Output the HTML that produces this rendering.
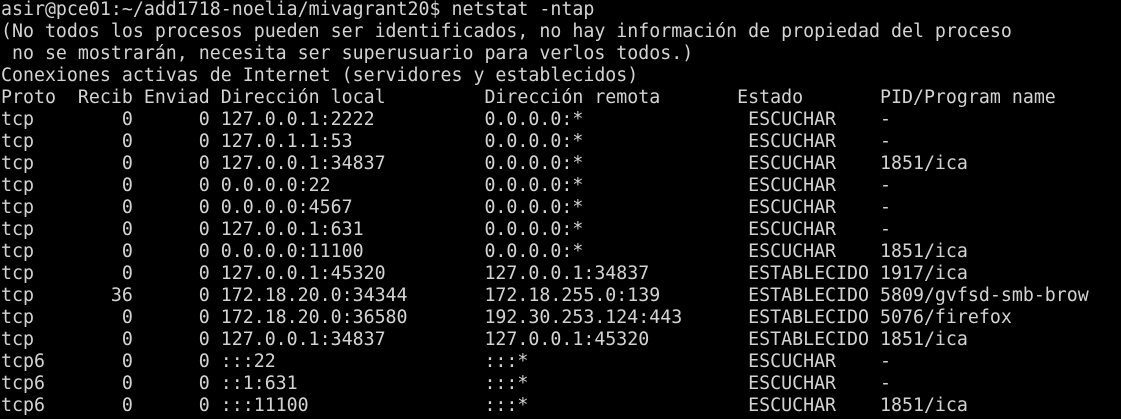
<!DOCTYPE html>
<html><head><meta charset="utf-8"><style>
html,body{margin:0;padding:0;background:#000;width:1121px;height:419px;overflow:hidden}
pre{margin:0;padding:0;position:absolute;left:1px;top:-1px;font-family:"DejaVu Sans Mono","Liberation Mono",monospace;font-size:18.25px;line-height:22px;color:#d3d3d3;white-space:pre}
</style></head><body><pre>asir@pce01:~/add1718-noelia/mivagrant20$ netstat -ntap
(No todos los procesos pueden ser identificados, no hay información de propiedad del proceso
 no se mostrarán, necesita ser superusuario para verlos todos.)
Conexiones activas de Internet (servidores y establecidos)
Proto  Recib Enviad Dirección local         Dirección remota       Estado       PID/Program name
tcp        0      0 127.0.0.1:2222          0.0.0.0:*               ESCUCHAR    -
tcp        0      0 127.0.1.1:53            0.0.0.0:*               ESCUCHAR    -
tcp        0      0 127.0.0.1:34837         0.0.0.0:*               ESCUCHAR    1851/ica
tcp        0      0 0.0.0.0:22              0.0.0.0:*               ESCUCHAR    -
tcp        0      0 0.0.0.0:4567            0.0.0.0:*               ESCUCHAR    -
tcp        0      0 127.0.0.1:631           0.0.0.0:*               ESCUCHAR    -
tcp        0      0 0.0.0.0:11100           0.0.0.0:*               ESCUCHAR    1851/ica
tcp        0      0 127.0.0.1:45320         127.0.0.1:34837         ESTABLECIDO 1917/ica
tcp       36      0 172.18.20.0:34344       172.18.255.0:139        ESTABLECIDO 5809/gvfsd-smb-brow
tcp        0      0 172.18.20.0:36580       192.30.253.124:443      ESTABLECIDO 5076/firefox
tcp        0      0 127.0.0.1:34837         127.0.0.1:45320         ESTABLECIDO 1851/ica
tcp6       0      0 :::22                   :::*                    ESCUCHAR    -
tcp6       0      0 ::1:631                 :::*                    ESCUCHAR    -
tcp6       0      0 :::11100                :::*                    ESCUCHAR    1851/ica
</pre></body></html>
